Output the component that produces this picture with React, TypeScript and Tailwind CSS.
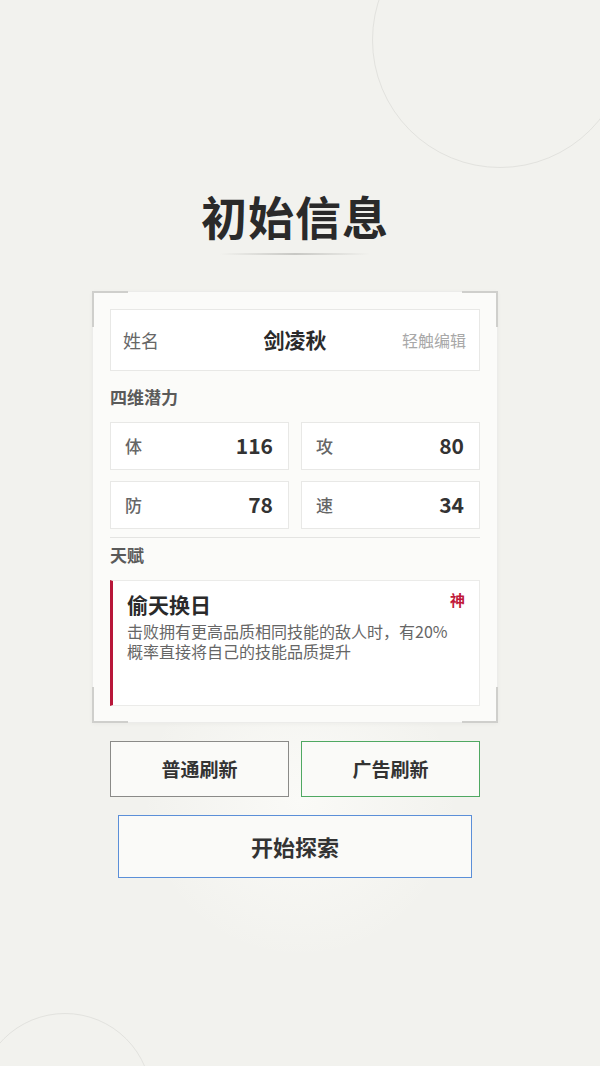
import React from "react";

const stats = [
  { label: "体", value: 116 },
  { label: "攻", value: 80 },
  { label: "防", value: 78 },
  { label: "速", value: 34 },
];

function Corner({ className }: { className: string }) {
  return <div className={`absolute w-[36px] h-[36px] border-[#cfcfcc] ${className}`} />;
}

export default function App() {
  return (
    <div
      className="relative w-[600px] h-[1066px] overflow-hidden bg-[#f2f2ee] text-[#2b2b2b]"
      style={{ fontFamily: '"Noto Sans CJK SC", "Noto Sans", sans-serif' }}
    >
      {/* decorative circles */}
      <div className="absolute left-[372px] top-[-88px] w-[256px] h-[256px] rounded-full border border-[#e2e2de]" />
      <div className="absolute left-[-22px] top-[1013px] w-[174px] h-[174px] rounded-full border border-[#e2e2de]" />
      <div className="absolute left-[140px] top-[640px] w-[320px] h-[320px] rounded-full bg-[radial-gradient(circle,#fafaf7_0%,rgba(242,242,238,0)_70%)]" />

      <div className="relative flex flex-col items-center pt-[191px] pr-[10px]">
        <h1 className="text-[46px] leading-[48px] font-bold tracking-[1px] text-[#2a2a2a]">初始信息</h1>
        <div className="mt-[14px] h-[2px] w-[150px] bg-[linear-gradient(90deg,rgba(200,200,196,0),#c8c8c4_50%,rgba(200,200,196,0))]" />

        <section className="relative mt-[36px] w-[406px] bg-[#fbfbf9] border border-[#ececea] px-[17px] pt-[17px] pb-[16px] shadow-[0_1px_4px_rgba(0,0,0,0.04)]">
          <Corner className="left-[-1px] top-[-1px] border-t-2 border-l-2" />
          <Corner className="right-[-1px] top-[-1px] border-t-2 border-r-2" />
          <Corner className="left-[-1px] bottom-[-1px] border-b-2 border-l-2" />
          <Corner className="right-[-1px] bottom-[-1px] border-b-2 border-r-2" />

          <div className="relative flex items-center justify-between h-[62px] bg-white border border-[#e8e8e6] pl-[12px] pr-[13px]">
            <span className="text-[18px] text-[#666]">姓名</span>
            <span className="absolute left-1/2 -translate-x-1/2 text-[21px] font-bold text-[#2a2a2a]">剑凌秋</span>
            <span className="text-[16px] text-[#a8a8a8]">轻触编辑</span>
          </div>

          <div className="mt-[14px] text-[17px] leading-[24px] font-bold text-[#5a5a5a]">四维潜力</div>

          <div className="mt-[13px] grid grid-cols-2 gap-x-[12px] gap-y-[11px]">
            {stats.map((s) => (
              <div
                key={s.label}
                className="flex items-center justify-between h-[48px] bg-white border border-[#e8e8e6] pl-[14px] pr-[15px]"
              >
                <span className="text-[17px] font-medium text-[#666]">{s.label}</span>
                <span className="text-[21px] font-bold text-[#333]">{s.value}</span>
              </div>
            ))}
          </div>

          <div className="mt-[8px] h-px bg-[#e4e4e2]" />

          <div className="mt-[5px] text-[17px] leading-[24px] font-bold text-[#5a5a5a]">天赋</div>

          <div className="mt-[13px] h-[126px] bg-white border border-[#ebebe9] border-l-[3px] border-l-[#b8173a] pl-[14px] pr-[14px] pt-[11px]">
            <div className="flex items-start justify-between">
              <span className="text-[21px] leading-[24px] font-bold text-[#2a2a2a]">偷天换日</span>
              <span className="text-[15px] leading-[16px] font-bold text-[#c0183a]">神</span>
            </div>
            <p className="mt-[5px] max-w-[334px] text-[16px] leading-[20px] text-[#666]">
              击败拥有更高品质相同技能的敌人时，有20%概率直接将自己的技能品质提升
            </p>
          </div>
        </section>

        <div className="mt-[18px] flex gap-[12px]">
          <button className="w-[179px] h-[56px] bg-[#fafaf8] border-[1.5px] border-[#8a8a88] text-[19px] font-bold text-[#333]">
            普通刷新
          </button>
          <button className="w-[179px] h-[56px] bg-[#fafaf8] border-[1.5px] border-[#4fa862] text-[19px] font-bold text-[#333]">
            广告刷新
          </button>
        </div>

        <button className="mt-[18px] w-[354px] h-[63px] bg-[#fafaf8] border-[1.5px] border-[#5b8fd8] text-[22px] font-bold text-[#333]">
          开始探索
        </button>
      </div>
    </div>
  );
}
